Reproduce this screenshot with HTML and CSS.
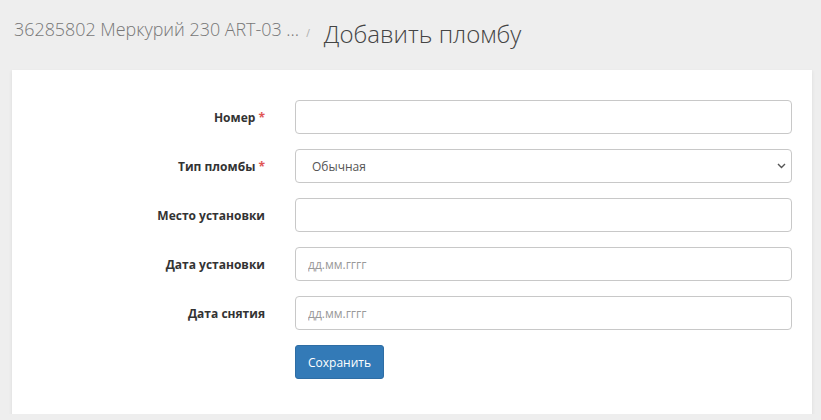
FILE: index.html
```html
<!DOCTYPE html>
<html lang="ru">

<head>
  <meta charset="UTF-8">
  <meta name="viewport" content="width=device-width, initial-scale=1.0">
  <title>Добавить пломбу</title>
  <link rel="stylesheet" href="styles.css">
</head>

<body>
  <div class="page-head">
    <span class="crumb">36285802 Меркурий 230 ART-03 ...</span>
    <span class="crumb-sep">/</span>
    <h1 class="page-title">Добавить пломбу</h1>
  </div>

  <div class="portlet">
    <form class="form-grid">
      <label class="control-label">Номер <span class="required">*</span></label>
      <input class="form-control" type="text">

      <label class="control-label">Тип пломбы <span class="required">*</span></label>
      <div class="select-wrap">
        <select class="form-control">
          <option>Обычная</option>
        </select>
        <svg class="chevron" width="9" height="6" viewBox="0 0 9 6">
          <path d="M1 1l3.5 3.5L8 1" fill="none" stroke="#555" stroke-width="1.4" />
        </svg>
      </div>

      <label class="control-label">Место установки</label>
      <input class="form-control" type="text">

      <label class="control-label">Дата установки</label>
      <input class="form-control" type="text" placeholder="дд.мм.гггг">

      <label class="control-label">Дата снятия</label>
      <input class="form-control" type="text" placeholder="дд.мм.гггг">

      <span></span>
      <div class="actions">
        <button type="button" class="btn">Сохранить</button>
      </div>
    </form>
  </div>
</body>

</html>
```

FILE: styles.css
```css
body {
  margin: 0;
  padding: 0 9px 0 12px;
  background-color: #eee;
  font-family: "Open Sans", "Liberation Sans", sans-serif;
  color: #333;
}

.page-head {
  display: flex;
  align-items: flex-start;
  height: 70px;
  padding-left: 2px;
  box-sizing: border-box;
  line-height: 1;
  white-space: nowrap;
}

.crumb {
  margin-top: 21px;
  font-size: 17.9px;
  font-weight: 300;
  color: #777;
}

.crumb-sep {
  margin: 28px 14px 0 7px;
  font-size: 10px;
  color: #aaa;
}

.page-title {
  margin: 22px 0 0;
  font-size: 24px;
  font-weight: 300;
  color: #444;
}

.portlet {
  background-color: #fff;
  box-shadow: 0 2px 3px 1px rgba(0, 0, 0, .05);
  padding: 30px 20px 35px 0;
}

.form-grid {
  display: grid;
  grid-template-columns: 1fr 497px;
  row-gap: 15px;
  align-items: center;
}

.control-label {
  text-align: right;
  padding-right: 30px;
  font-size: 12px;
  font-weight: 700;
  color: #333;
}

.required {
  color: #e05555;
}

.form-control {
  display: block;
  width: 100%;
  height: 34px;
  box-sizing: border-box;
  padding: 6px 12px;
  border: 1px solid #c8c8c8;
  border-radius: 4px;
  background-color: #fff;
  font-family: inherit;
  font-size: 12px;
  color: #555;
  outline: none;
}

.form-control::placeholder {
  color: #999;
}

.select-wrap {
  position: relative;
}

.select-wrap select {
  appearance: none;
  padding-left: 16px;
}

.chevron {
  position: absolute;
  right: 6px;
  top: 14px;
}

.btn {
  height: 34px;
  padding: 0 12px;
  border: 1px solid #2e6da4;
  border-radius: 3px;
  background-color: #337ab7;
  color: #fff;
  font-family: inherit;
  font-size: 12px;
}
```
